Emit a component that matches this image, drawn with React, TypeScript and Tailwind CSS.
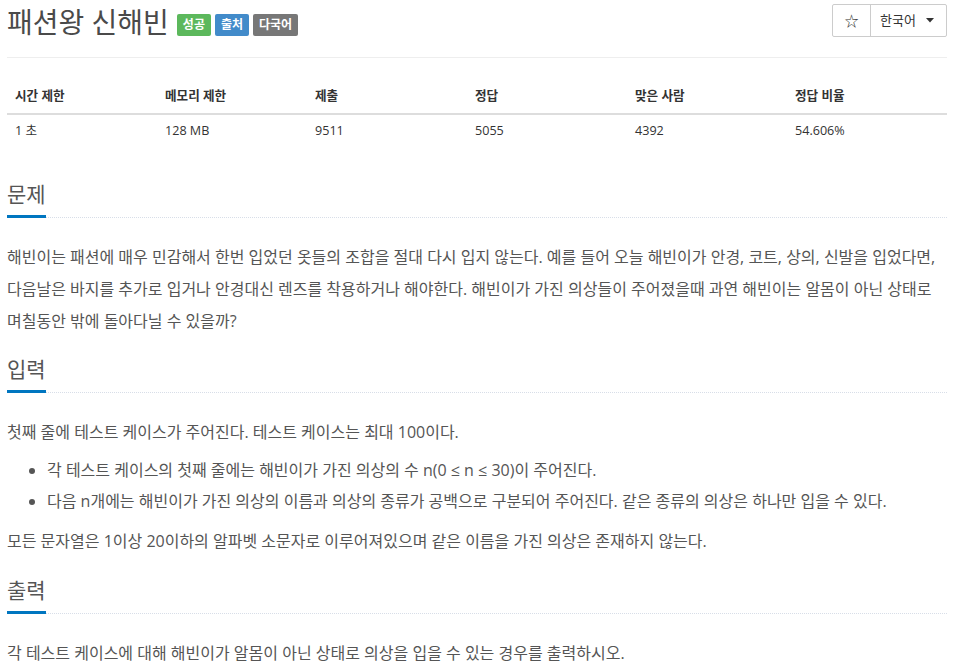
import React from "react";

const FONT = { fontFamily: '"Open Sans", "Noto Sans CJK KR", sans-serif' };

function SectionHeading({ title }: { title: string }) {
  return (
    <div className="border-b border-dotted border-[#d8dee8]">
      <h2 className="inline-block text-[21px] leading-[23px] font-normal text-[#555] pb-[9px] border-b-[3px] border-[#0076c0] -mb-px">
        {title}
      </h2>
    </div>
  );
}

export default function App() {
  const heads = ["시간 제한", "메모리 제한", "제출", "정답", "맞은 사람", "정답 비율"];
  const vals = ["1 초", "128 MB", "9511", "5055", "4392", "54.606%"];
  return (
    <div className="bg-white w-[954px] min-h-[669px] px-[7px] text-[#555]" style={FONT}>
      {/* header */}
      <div className="flex justify-between items-start h-[58px] border-b border-[#eee]">
        <div className="flex items-center pt-[7px]">
          <h1 className="text-[28px] leading-[30px] font-normal text-[#4a4a4a]">패션왕 신해빈</h1>
          <div className="flex items-center gap-[4px] ml-[8px] mt-[6px]">
            <span className="h-[22px] px-[6px] flex items-center bg-[#5cb85c] text-white text-[12px] font-bold rounded-[2px]">성공</span>
            <span className="h-[22px] px-[6px] flex items-center bg-[#428bca] text-white text-[12px] font-bold rounded-[2px]">출처</span>
            <span className="h-[22px] px-[6px] flex items-center bg-[#777] text-white text-[12px] font-bold rounded-[2px]">다국어</span>
          </div>
        </div>
        <div className="flex mt-[4px] border border-[#ccc] rounded-[2px] h-[33px] text-[#333]">
          <div className="w-[38px] flex items-center justify-center border-r border-[#ccc] text-[14px]">☆</div>
          <div className="w-[75px] flex items-center pl-[9px] gap-[10px] text-[13px]">
            <span>한국어</span>
            <svg width="8" height="5" viewBox="0 0 8 5"><path d="M0 0 L8 0 L4 4.5 Z" fill="#333" /></svg>
          </div>
        </div>
      </div>

      {/* table */}
      <div className="mt-[21px] text-[12.6px]">
        <div className="grid grid-cols-[150px_150px_160px_160px_160px_160px] border-b-2 border-[#ddd] font-bold text-[#333]">
          {heads.map((h) => (
            <div key={h} className="px-[8px] py-[8px] leading-[18px]">{h}</div>
          ))}
        </div>
        <div className="grid grid-cols-[150px_150px_160px_160px_160px_160px] text-[#333]">
          {vals.map((v) => (
            <div key={v} className="px-[8px] py-[7px] leading-[18px]">{v}</div>
          ))}
        </div>
      </div>

      {/* 문제 */}
      <section className="mt-[36px]">
        <SectionHeading title="문제" />
        <p className="mt-[23px] text-[16px] leading-[32px]">
          해빈이는 패션에 매우 민감해서 한번 입었던 옷들의 조합을 절대 다시 입지 않는다. 예를 들어 오늘 해빈이가 안경, 코트, 상의, 신발을 입었다면, 다음날은 바지를 추가로 입거나 안경대신 렌즈를 착용하거나 해야한다. 해빈이가 가진 의상들이 주어졌을때 과연 해빈이는 알몸이 아닌 상태로 며칠동안 밖에 돌아다닐 수 있을까?
        </p>
      </section>

      {/* 입력 */}
      <section className="mt-[21px]">
        <SectionHeading title="입력" />
        <div className="text-[16px] leading-[32.4px]">
          <p className="mt-[23px]">첫째 줄에 테스트 케이스가 주어진다. 테스트 케이스는 최대 100이다.</p>
          <ul className="mt-[7px] pl-[40px] list-disc marker:text-[#555] leading-[30.5px]">
            <li>각 테스트 케이스의 첫째 줄에는 해빈이가 가진 의상의 수 n(0 ≤ n ≤ 30)이 주어진다.</li>
            <li>다음 n개에는 해빈이가 가진 의상의 이름과 의상의 종류가 공백으로 구분되어 주어진다. 같은 종류의 의상은 하나만 입을 수 있다.</li>
          </ul>
          <p className="mt-[9px]">모든 문자열은 1이상 20이하의 알파벳 소문자로 이루어져있으며 같은 이름을 가진 의상은 존재하지 않는다.</p>
        </div>
      </section>

      {/* 출력 */}
      <section className="mt-[21px]">
        <SectionHeading title="출력" />
        <p className="mt-[23px] text-[16px] leading-[32.4px]">
          각 테스트 케이스에 대해 해빈이가 알몸이 아닌 상태로 의상을 입을 수 있는 경우를 출력하시오.
        </p>
      </section>
    </div>
  );
}
